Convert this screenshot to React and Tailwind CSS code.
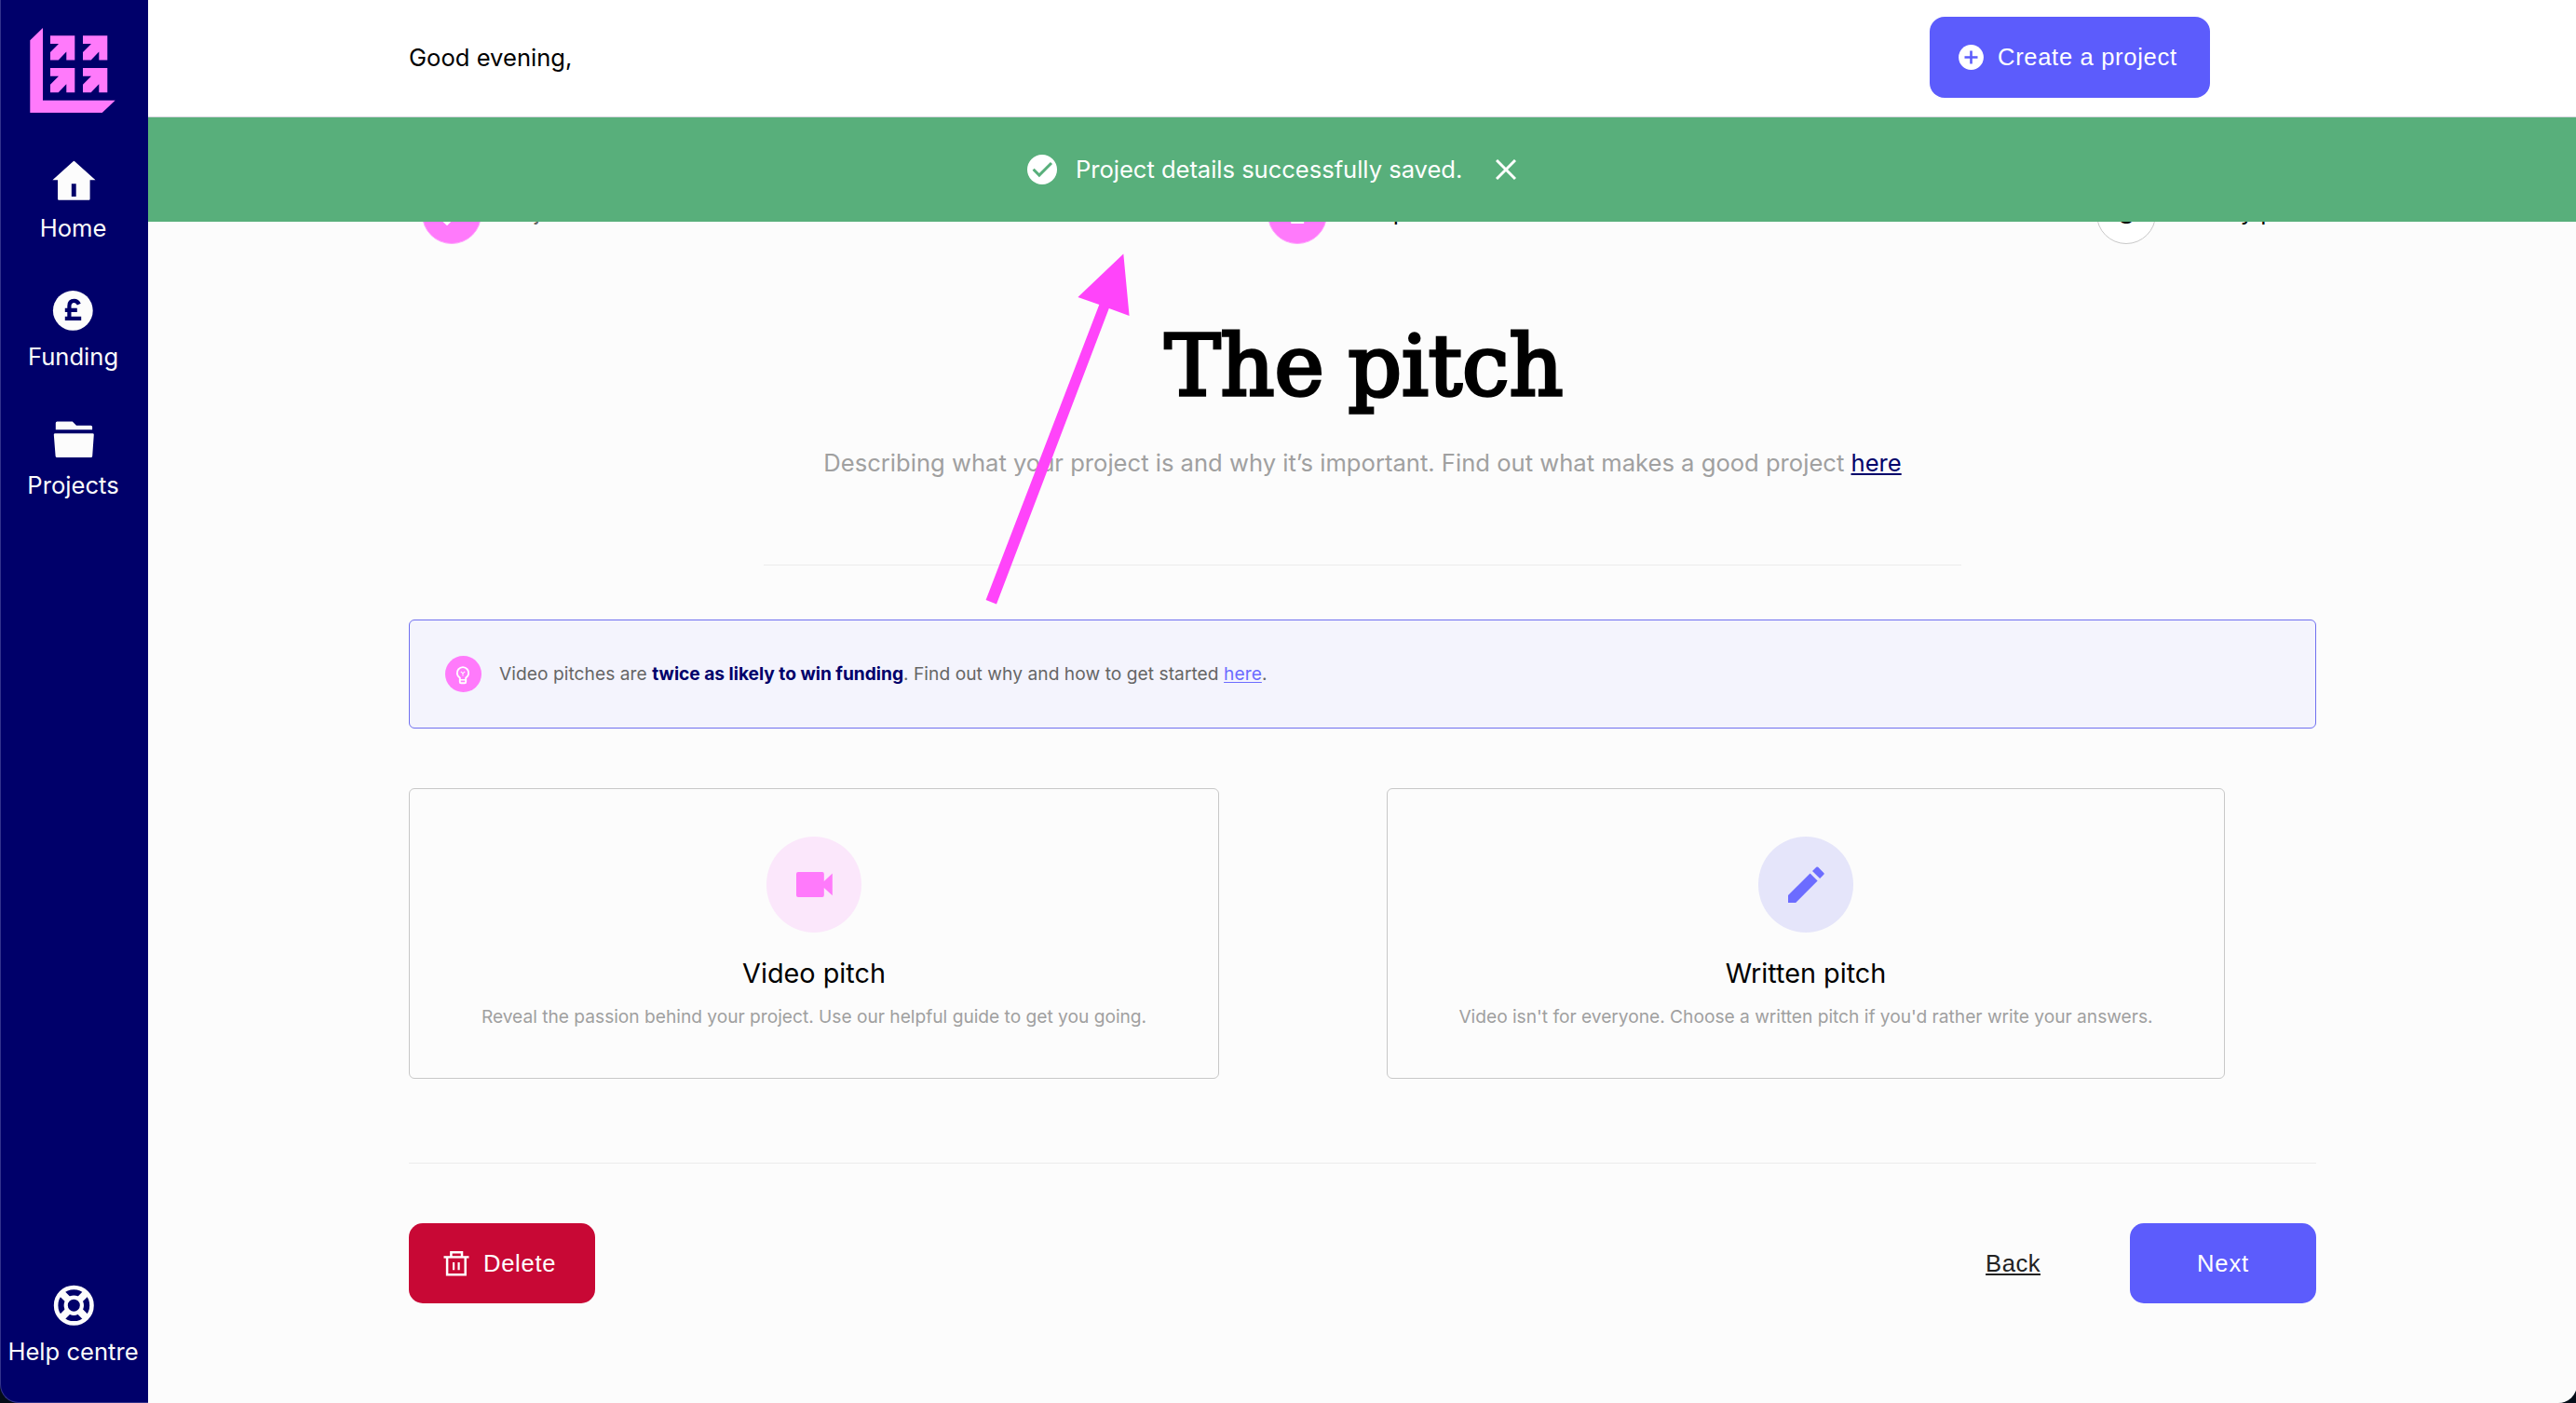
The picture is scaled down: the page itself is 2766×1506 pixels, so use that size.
const LogoArrow = ({ x, y }) => (
  <path transform={`translate(${x} ${y})`} d="M0 0H26.3V26.3H17.3V17.3L8.7 26.3H0V17.7L9 8.7H0Z" />
);

const Logo = () => (
  <svg width="92" height="91" viewBox="0 0 92 91" fill="#ff7afb">
    <path d="M0.3 13.3L14 0V77.7H91.7L77.7 91H0.3Z" />
    <LogoArrow x={22} y={8.3} />
    <LogoArrow x={57} y={8.3} />
    <LogoArrow x={22} y={43} />
    <LogoArrow x={57} y={43} />
  </svg>
);

const iconProps = { width: 46, height: 44, viewBox: "-0.6 0 46 44", className: "overflow-visible", fill: "#fcfcfc" };

const HomeIcon = () => (
  <svg {...iconProps}>
    <path
      fillRule="evenodd"
      d="M22 1.2Q22.8 0.4 23.6 1.2L45.9 21.3H40V41.5Q40 42.7 38.8 42.7H6.6Q5.4 42.7 5.4 41.5V21.3H-0.2ZM20.2 25.2V38.9H25.1V25.2Z"
    />
  </svg>
);

const PoundIcon = () => (
  <svg {...iconProps}>
    <circle cx="22.7" cy="23.4" r="21.4" />
    <g fill="none" stroke="#00006a" strokeWidth="4.2">
      <path d="M29.2 16.6C28 13.8 26 12.8 24 12.8C20.4 12.8 18.8 15.2 18.8 18.4V32" />
      <path d="M14.2 22.8H27.2M14.2 31.8H31.6" />
    </g>
  </svg>
);

const FolderIcon = () => (
  <svg {...iconProps}>
    <path d="M3.2 13.2V6Q3.2 4.5 4.7 4.5H21.2L25.4 8.8H41Q42.5 8.8 42.5 10.3V13.2Z" />
    <path d="M2.7 17.2H42.7Q44.3 17.2 44.2 18.6L42.6 41.5Q42.5 43 41 43H4.6Q3.1 43 3 41.5L1.2 18.6Q1.1 17.2 2.7 17.2Z" />
  </svg>
);

const HelpIcon = () => (
  <svg {...iconProps}>
    <g fill="none" stroke="#fcfcfc" transform="translate(22.7 23.2)">
      <circle r="19.2" strokeWidth="4.6" />
      <circle r="8.6" strokeWidth="4.2" />
      <path d="M6.6 6.6L13 13M-6.6 6.6L-13 13M6.6 -6.6L13 -13M-6.6 -6.6L-13 -13" strokeWidth="7.6" />
    </g>
  </svg>
);

const NavItem = ({ icon, label }) => (
  <a className="flex flex-col items-center gap-[13px] text-[25.6px] leading-[31px] text-[#fcfcfc]">
    {icon}
    <span className="whitespace-nowrap">{label}</span>
  </a>
);

const Sidebar = () => (
  <aside className="flex w-[159px] shrink-0 flex-col items-center rounded-bl-[20px] border-b border-l border-[#33338c] bg-[#00006a] pr-[3px]">
    <div className="mt-[30px] -ml-[2px] h-[91px] w-[92px]">
      <Logo />
    </div>
    <nav className="mt-[51px] flex flex-col items-center gap-[50px]">
      <NavItem icon={<HomeIcon />} label="Home" />
      <NavItem icon={<PoundIcon />} label="Funding" />
      <NavItem icon={<FolderIcon />} label="Projects" />
    </nav>
    <div className="mt-auto mb-[39px]">
      <NavItem icon={<HelpIcon />} label="Help centre" />
    </div>
  </aside>
);

const Header = () => (
  <header className="flex h-[126px] items-center border-b border-[#d4d4dc] bg-white pb-[2px] pl-[280px]">
    <span className="w-[1633px] text-[25.6px] leading-8 text-black">Good evening,</span>
    <button className="flex h-[87px] w-[301px] items-center rounded-[16px] bg-[#5c5cfc] pl-[31px] font-['Liberation_Sans',Arial,sans-serif] text-[25.6px] leading-8 tracking-[0.66px] text-white">
      <svg width="27" height="27" viewBox="0 0 27 27" className="mr-[15px]">
        <circle cx="13.5" cy="13.5" r="13.4" fill="#fff" />
        <path d="M13.5 6.5V20.5M6.5 13.5H20.5" stroke="#5c5cfc" strokeWidth="2.6" />
      </svg>
      <span className="-mt-[1px]">Create a project</span>
    </button>
  </header>
);

const Toast = () => (
  <div className="absolute inset-x-0 top-[126px] z-10 flex h-[112px] items-center bg-[#58af7b] pl-[944px] text-[25.6px] leading-8 text-white">
    <svg width="32" height="32" viewBox="0 0 32 32">
      <circle cx="16" cy="16" r="16" fill="#fff" />
      <path d="M6.6 15.8L12.9 22.1L26 9" fill="none" stroke="#58af7b" strokeWidth="3" />
    </svg>
    <span className="ml-[20px] tracking-[-0.04px] whitespace-nowrap">Project details successfully saved.</span>
    <svg width="22" height="22" viewBox="0 0 22 22" className="ml-[36px]">
      <path d="M1 1L21 21M21 1L1 21" stroke="#fff" strokeWidth="3" />
    </svg>
  </div>
);

const Step = ({ className, badge, label, badgeClass }) => (
  <div className={className + " flex shrink-0"}>
    <span
      className={
        badgeClass + " flex h-16 w-16 items-center justify-center rounded-full border text-[26.5px] leading-8 font-bold"
      }
    >
      {badge}
    </span>
    <span className="mt-[13px] text-[25.6px] leading-8">{label}</span>
  </div>
);

const Steps = () => (
  <div className="mt-[72px] flex pl-[14px]">
    <Step
      className="w-[908px] gap-[16px] text-[#666]"
      badgeClass="border-[#ffa5fc] bg-[#ff7afb]"
      badge={
        <svg width="32" height="24" viewBox="0 0 32 24">
          <path d="M2 13L11 21.4L29 3" fill="none" stroke="#fff" strokeWidth="4" />
        </svg>
      }
      label="Project details"
    />
    <Step className="w-[890px] gap-[17px] text-black" badgeClass="border-[#ffa5fc] bg-[#ff7afb] text-white" badge="2" label="The pitch" />
    <Step className="gap-[6px] text-black" badgeClass="border-[#c8c8c8] bg-white text-black" badge="3" label="Delivery plan" />
  </div>
);

const Tip = () => (
  <div className="mt-[58px] flex h-[117px] items-center rounded-[6px] border border-[#7070f0] bg-[#f4f4fd] pl-[38px] text-[19.2px] leading-6 text-[#666]">
    <svg width="39" height="39" viewBox="0 0 39 39" className="mr-[19px]">
      <circle cx="19.5" cy="19.5" r="19.5" fill="#ff7afb" />
      <g fill="none" stroke="#fff" strokeWidth="1.9">
        <path d="M15.8 23.6A6.2 6.2 0 1 1 22.2 23.6V28Q22.2 29.3 20.9 29.3H17.1Q15.8 29.3 15.8 28Z" />
        <path d="M16 25.8H22" strokeWidth="1.5" />
        <path d="M16.8 16.8L19 18.8L21.2 16.8M19 18.8V21.6" strokeWidth="1.1" />
      </g>
    </svg>
    <p className="-mt-[2px] tracking-[0.04px] whitespace-nowrap">
      Video pitches are <b className="font-bold tracking-[-0.03px] text-[#00006a]">twice as likely to win funding</b>. Find out
      why and how to get started{" "}
      <a className="text-[#6c6cff] underline decoration-1 underline-offset-2">here</a>.
    </p>
  </div>
);

const VideoIcon = () => (
  <svg width="39" height="27" viewBox="0 0 39 27" fill="#ff7afb">
    <path d="M2 0H28Q29.8 0 29.8 2V10L38.8 1.4V25.2L29.8 17V25Q29.8 27 28 27H2Q0 27 0 25V2Q0 0 2 0Z" />
  </svg>
);

const PencilIcon = () => (
  <svg width="39" height="39" viewBox="0 0 39 39" fill="#6c6cff">
    <path d="M0 31L23.6 7.4L31.6 15.4L8.2 39H0Z" />
    <path d="M26 5L30.3 0.8Q31.2 0 32.2 0.8L38.3 6.9Q39.2 7.8 38.3 8.8L34.1 13Z" />
  </svg>
);

const PitchCard = ({ className, circleClass, icon, title, text }) => (
  <section className={className + " flex h-[312px] flex-col items-center rounded-[6px] border border-[#c8c8c8] pt-[51px]"}>
    <div className={circleClass + " flex h-[103px] w-[102px] items-center justify-center rounded-full"}>{icon}</div>
    <h2 className="mt-[26px] text-[28.8px] leading-9 text-black">{title}</h2>
    <p className="mt-[16px] text-[19.2px] leading-6 tracking-[-0.02px] whitespace-nowrap text-[#a0a0a0]">{text}</p>
  </section>
);

const Footer = () => (
  <div className="mt-[64px] flex items-center font-['Liberation_Sans',Arial,sans-serif] text-[25.6px] leading-8">
    <button className="flex h-[86px] w-[200px] items-center rounded-[15px] bg-[#c80835] pl-[37px] tracking-[0.7px] text-white">
      <svg width="28" height="27" viewBox="0 0 28 27" className="mr-[15px]" fill="none" stroke="#fff">
        <path d="M0.5 6.4H27.5" strokeWidth="2.4" />
        <path d="M8.4 6V1.3H20V6" strokeWidth="2.5" />
        <path d="M4.1 6.5V25.2H23.7V6.5" strokeWidth="2.5" />
        <path d="M11.1 12V20.2M16.6 12V20.2" strokeWidth="2.2" />
      </svg>
      Delete
    </button>
    <a className="ml-auto tracking-[0.5px] text-[#222] underline decoration-2 underline-offset-2">Back</a>
    <button className="ml-[96px] h-[86px] w-[200px] rounded-[15px] bg-[#5c5cfc] tracking-[0.8px] text-white">Next</button>
  </div>
);

const PointerArrow = () => (
  <svg className="absolute top-[272px] left-[1058px] z-20" width="156" height="378" viewBox="1058 272 156 378" fill="#ff44fa">
    <path d="M1058.6 644L1180.3 327L1157.4 319L1206.3 272.5L1212.6 339L1190.8 331L1070 648.6Z" />
  </svg>
);

export default function App() {
  return (
    <div className="relative flex h-[1506px] w-[2766px] overflow-hidden bg-[#040d18] font-[Inter,sans-serif]">
      <Sidebar />
      <div className="relative flex-1 rounded-br-[20px] bg-[#fcfcfc]">
        <Header />
        <Toast />
        <main className="mx-[280px] flex w-[2048px] flex-col">
          <Steps />
          <h1 className="mt-[81px] pl-[3px] text-center font-['DejaVu_Serif',serif] text-[90px] leading-[100px] font-normal text-black [word-spacing:-3px] [-webkit-text-stroke:3.5px_black]">
            The pitch
          </h1>
          <p className="mt-[38px] text-center text-[25.6px] leading-8 text-[#a0a0a0]">
            Describing what your project is and why it’s important. Find out what makes a good project{" "}
            <a className="text-[#00006a] underline decoration-2 underline-offset-2">here</a>
          </p>
          <hr className="mx-auto mt-[93px] w-[1286px] border-[#ebebeb]" />
          <Tip />
          <div className="mt-[64px] flex gap-[180px]">
            <PitchCard
              className="w-[870px]"
              circleClass="bg-[#fbe7fb]"
              icon={<VideoIcon />}
              title="Video pitch"
              text="Reveal the passion behind your project. Use our helpful guide to get you going."
            />
            <PitchCard
              className="w-[900px]"
              circleClass="bg-[#e5e5fa]"
              icon={<PencilIcon />}
              title="Written pitch"
              text="Video isn't for everyone. Choose a written pitch if you'd rather write your answers."
            />
          </div>
          <hr className="mt-[90px] border-[#ebebeb]" />
          <Footer />
        </main>
      </div>
      <PointerArrow />
    </div>
  );
}
